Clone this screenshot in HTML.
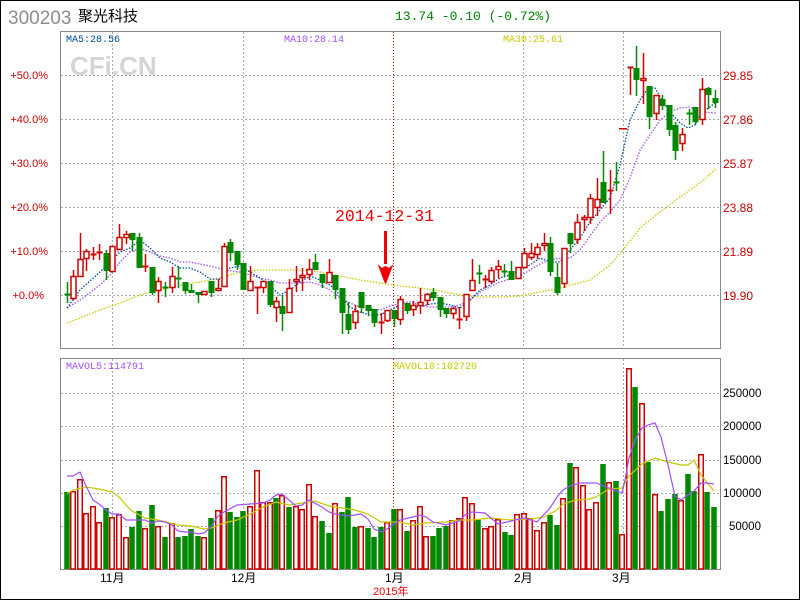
<!DOCTYPE html>
<html><head><meta charset="utf-8">
<style>
html,body{margin:0;padding:0;background:#fff;}
#w{position:relative;width:798px;height:598px;border:1px solid #000;overflow:hidden;background:#fff;}
svg{position:absolute;left:-1px;top:-1px;}
.t{font-family:"Liberation Sans","Noto Sans CJK SC",sans-serif;}
.m{font-family:"Liberation Mono",monospace;}
</style></head><body>
<div id="w">
<svg id="s" width="800" height="600" xmlns="http://www.w3.org/2000/svg">
<text x="8" y="24" class="t" font-size="19" fill="#8c8c8c">300203</text>
<text x="78" y="21" class="t" font-size="15" fill="#000">聚光科技</text>
<text x="395" y="20" class="m" font-size="13" fill="#008000">13.74 -0.10 (-0.72%)</text>

<g stroke="#aaa" stroke-dasharray="2,2" stroke-width="1" fill="none">
<path d="M61 75.5H720M61 119.5H720M61 163.5H720M61 207.5H720M61 251.5H720M61 295.5H720"/>
<path d="M61 393.5H720M61 426.5H720M61 460.5H720M61 493.5H720M61 526.5H720"/>
<path d="M112.5 32V348M243.5 32V348M523.5 32V348M623.5 32V348"/>
<path d="M112.5 359V569M243.5 359V569M523.5 359V569M623.5 359V569"/>
</g>
<path d="M393.5 32V348M393.5 359V569" stroke="#d00" stroke-dasharray="1,2" fill="none"/>
<rect x="60.5" y="31.5" width="660" height="317" fill="none" stroke="#888"/>
<rect x="60.5" y="358.5" width="660" height="211" fill="none" stroke="#888"/>

<text x="70" y="75" class="t" font-size="26" font-weight="bold" fill="#d4d4d4">CFi.CN</text>
<text x="66" y="42" class="m" font-size="10" fill="#004a9c">MA5:28.56</text>
<text x="284" y="42" class="m" font-size="10" fill="#a050ff">MA10:28.14</text>
<text x="503" y="42" class="m" font-size="10" fill="#c8c800">MA30:25.61</text>
<text x="66" y="369" class="m" font-size="10" fill="#a050ff">MAVOL5:114791</text>
<text x="393" y="369" class="m" font-size="10" fill="#c8c800">MAVOL10:102720</text>

<g class="t" font-size="11" fill="#cc0000" text-anchor="end">
<text x="48" y="79">+50.0%</text><text x="48" y="123">+40.0%</text><text x="48" y="167">+30.0%</text>
<text x="48" y="211">+20.0%</text><text x="48" y="255">+10.0%</text><text x="44" y="299">+0.0%</text>
</g>
<g class="t" font-size="12" fill="#cc0000">
<text x="723" y="80">29.85</text><text x="723" y="124">27.86</text><text x="723" y="168">25.87</text>
<text x="723" y="212">23.88</text><text x="723" y="256">21.89</text><text x="723" y="300">19.90</text>
</g>
<g class="t" font-size="11.5" fill="#000">
<text x="723" y="397">250000</text><text x="723" y="430">200000</text><text x="723" y="464">150000</text>
<text x="723" y="497">100000</text><text x="729" y="530">50000</text>
</g>
<g class="t" font-size="12" fill="#000">
<text x="100" y="582">11月</text><text x="231" y="582">12月</text><text x="385" y="582">1月</text>
<text x="514" y="582">2月</text><text x="612" y="582">3月</text>
</g>
<text x="373" y="595" class="t" font-size="11" fill="#e00">2015年</text>

<text x="335" y="221" class="m" font-size="16.5" fill="#e00">2014-12-31</text>
<path d="M384 231h3v33h-3z M377.5 264 L385.5 285 L393.5 264 L389 268 L385.5 266 L382 268 Z" fill="#e00"/>

<g id="c"></g>
<g id="v"></g>
</svg>
</div>
<script>
var NS="http://www.w3.org/2000/svg";
function el(p,n,a){var e=document.createElementNS(NS,n);for(var k in a)e.setAttribute(k,a[k]);p.appendChild(e);return e;}
var C=[
[67,294,294,282,302,'g'],[73,276,298,270,299,'r'],[80,259,276,233,276,'r'],[86,251,258,249,270,'r'],[93,254,254,247,259,'r'],[99,252,252,244,259,'r'],
[106,253,270,250,279,'g'],[112,246,271,246,271,'r'],[119,237,249,224,249,'r'],[126,234,237,231,243,'r'],[132,233,239,233,250,'g'],[139,237,267,233,267,'g'],
[145,266,266,254,271,'r'],[152,267,292,267,294,'g'],[158,281,290,277,302,'r'],[165,287,287,282,296,'g'],[172,276,287,267,292,'r'],[178,278,278,266,287,'g'],
[185,282,290,282,293,'g'],[191,290,292,284,292,'g'],[198,292,294,292,302,'g'],[204,291,294,291,294,'r'],[211,281,292,281,296,'g'],[218,288,290,279,290,'r'],
[224,246,286,243,286,'r'],[230,242,252,239,260,'g'],[237,251,264,251,269,'g'],[243,263,289,263,289,'g'],[250,281,290,266,290,'r'],[257,287,287,287,313,'r'],
[263,281,287,281,292,'r'],[270,281,304,281,306,'g'],[276,301,307,297,321,'r'],[282,306,313,295,330,'g'],[289,288,312,279,312,'r'],[296,279,281,266,291,'r'],
[302,275,277,268,290,'r'],[309,269,274,259,279,'r'],[315,262,269,254,269,'g'],[322,274,282,274,287,'g'],[329,272,282,259,282,'r'],[335,275,289,275,298,'g'],
[342,288,312,288,333,'g'],[348,314,329,302,333,'g'],[355,311,322,305,328,'r'],[361,292,307,292,312,'g'],[368,305,310,305,315,'g'],[374,309,322,309,326,'g'],
[381,322,323,313,333,'r'],[387,310,320,310,321,'r'],[394,310,318,310,326,'g'],[400,299,319,296,324,'r'],[407,303,310,303,313,'g'],[413,305,309,301,315,'r'],
[420,302,305,288,313,'r'],[427,294,300,293,304,'r'],[433,292,297,288,300,'g'],[440,297,309,297,316,'g'],[446,308,313,308,317,'g'],[453,308,313,307,318,'r'],
[459,319,319,307,328,'r'],[466,294,316,294,320,'r'],[472,280,290,259,290,'r'],[479,273,273,265,283,'g'],[485,279,280,275,287,'r'],[491,270,281,267,283,'r'],
[498,266,269,260,277,'r'],[504,271,271,264,276,'g'],[511,271,279,261,279,'g'],[518,267,278,267,278,'r'],[524,253,267,248,267,'r'],[531,253,257,243,259,'r'],
[537,247,254,243,258,'r'],[544,243,245,233,250,'r'],[550,243,271,237,275,'g'],[557,277,292,263,294,'g'],[564,248,283,248,287,'r'],[570,233,243,233,252,'g'],
[577,222,239,214,243,'r'],[584,217,219,215,230,'r'],[590,198,217,194,223,'r'],[597,199,207,178,215,'r'],[603,182,202,151,202,'g'],[610,190,190,170,213,'r'],
[616,182,182,162,190,'g'],[623,128,128,128,128,'r'],[630,67,67,67,94,'r'],[636,68,79,46,95,'g'],[643,78,80,53,103,'r'],[649,86,116,86,128,'g'],
[656,95,113,95,119,'r'],[662,99,105,95,109,'g'],[669,105,129,105,135,'g'],[675,125,150,122,159,'g'],[682,134,143,128,150,'r'],[689,113,113,109,124,'g'],
[695,107,121,107,124,'g'],[702,89,119,78,124,'r'],[708,88,94,87,108,'g'],[715,98,102,90,107,'g']];
var g=document.getElementById('c');
function line(pts,col,dash){el(g,'polyline',{points:pts,fill:'none',stroke:col,'stroke-width':1.3,'stroke-dasharray':dash||'1.5,1.5'});}
line("67,323 80,318 100,310 120,303 140,295 160,290 180,285 200,282 220,278 240,272 260,270 280,270 300,270 320,272 340,276 360,280 380,283 400,286 420,288 440,291 460,295 480,297 500,297 520,296 540,292 560,288 590,280 610,265 623,250 640,228 660,212 680,197 700,183 716,169","#c8c800");
line("67,308 80,300 100,285 110,275 120,262 130,252 140,248 150,252 160,256 170,258 180,262 190,262 200,264 210,266 225,270 240,272 250,275 260,278 270,280 280,283 300,283 310,282 320,285 330,290 340,298 350,303 360,307 370,309 380,310 390,306 400,303 410,302 420,305 430,307 440,307 450,307 460,305 470,300 480,292 490,287 500,282 510,279 520,276 530,270 540,264 550,260 560,258 570,258 580,250 590,236 600,222 610,212 620,200 630,178 640,150 650,135 660,120 670,112 680,108 690,107 700,112 716,113","#a050ff");
line("67,308 80,290 100,272 120,252 130,248 140,240 150,248 160,258 170,262 180,268 190,268 200,272 210,279 220,279 230,268 240,266 250,272 260,278 270,286 280,295 290,290 300,282 310,276 320,280 330,285 340,295 350,307 360,312 370,315 380,315 390,310 400,305 410,306 420,307 430,304 440,303 450,305 460,308 470,300 480,290 490,285 500,278 510,275 520,270 530,265 540,258 550,262 560,262 570,250 580,238 590,222 600,210 610,198 620,165 630,120 640,100 648,88 655,88 662,100 670,112 680,123 688,128 695,125 702,112 710,107 716,102","#004a9c");
C.forEach(function(d){var x=d[0],col=d[5]=='r'?'#d00000':'#008800';
 el(g,'line',{x1:x+.5,x2:x+.5,y1:d[3],y2:d[4]+1,stroke:col,'stroke-width':1.5});
 var h=d[2]-d[1];
 if(d[0]==623){el(g,'rect',{x:x-4,y:d[1],width:8,height:1.5,fill:col});return;}
 if(h<2){el(g,'rect',{x:x-2.5,y:d[1]-0.5,width:6,height:2,fill:col});}
 else if(d[5]=='r'){el(g,'rect',{x:x-2,y:d[1]+.5,width:5,height:h,fill:'#fff',stroke:col,'stroke-width':1.5});}
 else el(g,'rect',{x:x-2.5,y:d[1],width:6,height:h+1,fill:col});
});
var V=[[67,492,'g'],[73,491,'r'],[80,479,'r'],[86,513,'r'],[93,506,'r'],[99,522,'r'],[106,508,'g'],[112,517,'r'],[119,514,'r'],[126,537,'r'],[132,527,'g'],[139,511,'g'],[145,528,'r'],[152,505,'g'],[158,526,'r'],[165,537,'g'],[172,523,'r'],[178,537,'g'],[185,536,'g'],[191,529,'g'],[198,536,'g'],[204,537,'r'],[211,518,'g'],[218,510,'r'],[224,476,'r'],[230,512,'g'],[237,517,'g'],[243,511,'g'],[250,506,'r'],[257,470,'r'],[263,502,'r'],[270,502,'r'],[276,498,'g'],[282,495,'r'],[289,507,'g'],[296,506,'r'],[302,509,'r'],[309,484,'r'],[315,516,'r'],[322,521,'g'],[329,533,'g'],[335,503,'r'],[342,512,'g'],[348,497,'g'],[355,527,'g'],[361,526,'r'],[368,528,'g'],[374,537,'g'],[381,527,'g'],[387,522,'r'],[394,509,'g'],[400,509,'r'],[407,531,'g'],[413,520,'r'],[420,506,'r'],[426,536,'r'],[433,536,'g'],[439,528,'g'],[446,526,'g'],[452,520,'r'],[459,518,'r'],[465,497,'r'],[472,503,'r'],[478,520,'g'],[485,528,'r'],[491,526,'r'],[498,519,'r'],[505,532,'g'],[511,535,'g'],[517,514,'r'],[524,513,'r'],[530,518,'r'],[537,530,'r'],[544,522,'r'],[550,515,'g'],[557,525,'g'],[563,498,'r'],[570,463,'g'],[576,467,'r'],[583,485,'r'],[589,509,'r'],[596,502,'r'],[603,464,'g'],[609,482,'r'],[616,481,'g'],[622,534,'r'],[629,368,'r'],[635,387,'g'],[642,403,'r'],[648,462,'g'],[655,494,'r'],[661,511,'g'],[668,499,'g'],[675,494,'g'],[681,500,'r'],[688,474,'g'],[694,491,'g'],[701,454,'r'],[707,492,'g'],[714,507,'g']];
var vg=document.getElementById('v');
V.forEach(function(d){var x=d[0];
 if(d[2]=='r')el(vg,'rect',{x:x-2.25,y:d[1]+.75,width:4.5,height:569-d[1]-0.75,fill:'#fff',stroke:'#d00000','stroke-width':1.5});
 else el(vg,'rect',{x:x-2.75,y:d[1],width:5.5,height:569-d[1],fill:'#008800'});
});
el(vg,'polyline',{fill:'none',stroke:'#c8c800','stroke-width':1.2,points:"67,494 73,490 86,487 99,489 112,492 119,497 126,505 132,511 145,518 158,520 178,525 191,526 204,529 211,528 224,523 237,520 250,514 263,507 276,502 289,505 302,503 315,501 329,506 342,508 355,510 368,514 381,522 394,522 400,522 413,525 426,523 446,522 459,520 472,520 491,518 511,520 530,519 544,517 557,510 563,504 576,500 590,499 596,497 609,489 622,488 629,476 642,464 655,458 668,462 681,465 688,465 694,460 701,475 714,491"});
el(vg,'polyline',{fill:'none',stroke:'#a050ff','stroke-width':1.2,points:"67,476 73,476 80,472 86,486 93,500 99,504 106,510 112,514 119,514 126,520 132,520 145,520 152,523 158,521 165,522 172,525 178,531 185,532 191,532 198,534 204,533 211,527 218,516 224,512 237,505 250,504 263,503 270,500 276,495 282,494 289,500 296,506 302,505 309,500 322,507 329,512 335,514 342,515 348,516 361,514 368,519 374,529 381,532 387,529 394,524 400,520 413,517 420,515 426,517 433,522 446,525 459,521 465,515 472,512 485,513 498,524 511,521 524,518 537,522 550,508 557,497 563,490 570,486 580,483 596,483 609,488 622,493 625,480 629,458 635,440 642,428 648,425 655,423 661,437 668,465 675,496 681,500 688,495 694,491 701,483 707,483 714,484"});
</script>
</body></html>
